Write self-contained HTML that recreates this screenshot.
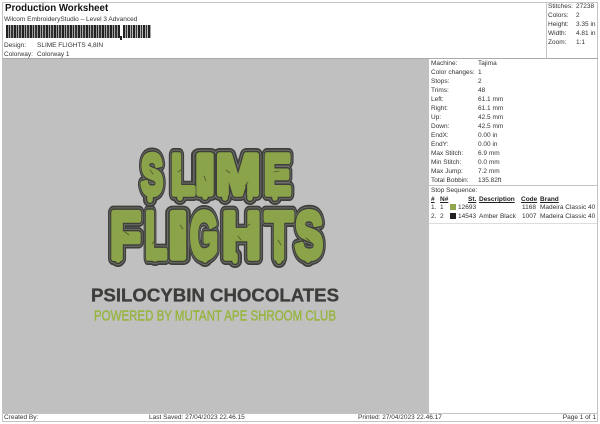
<!DOCTYPE html>
<html><head><meta charset="utf-8">
<style>
html,body{margin:0;padding:0;background:#fff}
#p{position:relative;width:600px;height:424px;overflow:hidden;background:#fff;font-family:"Liberation Sans",sans-serif;font-size:6.5px;color:#333;filter:blur(.35px)}
#p div.t{position:absolute;white-space:nowrap;line-height:9px;height:9px}
.l{position:absolute;background:#c4c4c4}
.b{font-weight:bold;text-decoration:underline;color:#222}
svg{position:absolute;left:0;top:0}
.s{font-size:57px}.f{font-size:66px}
</style></head><body><div id="p">
<div class="l" style="left:2px;top:2px;width:596px;height:1px"></div>
<div class="l" style="left:2px;top:2px;width:1px;height:420px"></div>
<div class="l" style="left:597px;top:2px;width:1px;height:420px"></div>
<div class="l" style="left:546px;top:2px;width:1px;height:57px"></div>
<div class="l" style="left:2px;top:58px;width:596px;height:1px;background:#aaa"></div>
<div style="position:absolute;left:3px;top:59px;width:426px;height:354px;background:#c0c0c0"></div>
<div class="l" style="left:2px;top:413px;width:596px;height:1px"></div>
<div class="l" style="left:2px;top:421px;width:596px;height:1px"></div>
<div class="l" style="left:429px;top:185px;width:168px;height:1px"></div>
<div class="l" style="left:429px;top:223px;width:168px;height:1px;background:#ddd"></div>

<div class="t" style="left:5px;top:3px;font-size:9.7px;font-weight:bold;color:#111;line-height:11px;height:11px">Production Worksheet</div>
<div class="t" style="left:4px;top:15px">Wilcom EmbroideryStudio – Level 3 Advanced</div>
<div id="bc" style="position:absolute;left:6px;top:25px;width:114px;height:13px;background:repeating-linear-gradient(90deg,#222 0 2px,#999 2px 3px,#222 3px 4px,#aaa 4px 5px,#333 5px 7px,#999 7px 8px)"></div>
<div style="position:absolute;left:120px;top:36px;width:2px;height:4px;background:#222"></div>
<div style="position:absolute;left:123px;top:25px;width:28px;height:13px;background:repeating-linear-gradient(90deg,#222 0 2px,#aaa 2px 3px,#333 3px 4px,#bbb 4px 5px)"></div>
<div class="t" style="left:4px;top:41px">Design:</div><div class="t" style="left:37px;top:41px">SLIME FLIGHTS 4,8IN</div>
<div class="t" style="left:4px;top:50px">Colorway:</div><div class="t" style="left:37px;top:50px">Colorway 1</div>

<div class="t" style="left:548px;top:2px">Stitches:</div><div class="t" style="left:576px;top:2px">27238</div>
<div class="t" style="left:548px;top:11px">Colors:</div><div class="t" style="left:576px;top:11px">2</div>
<div class="t" style="left:548px;top:20px">Height:</div><div class="t" style="left:576px;top:20px">3.35 in</div>
<div class="t" style="left:548px;top:29px">Width:</div><div class="t" style="left:576px;top:29px">4.81 in</div>
<div class="t" style="left:548px;top:38px">Zoom:</div><div class="t" style="left:576px;top:38px">1:1</div>

<div class="t" style="left:431px;top:59px">Machine:</div><div class="t" style="left:478px;top:59px">Tajima</div>
<div class="t" style="left:431px;top:68px">Color changes:</div><div class="t" style="left:478px;top:68px">1</div>
<div class="t" style="left:431px;top:77px">Stops:</div><div class="t" style="left:478px;top:77px">2</div>
<div class="t" style="left:431px;top:86px">Trims:</div><div class="t" style="left:478px;top:86px">48</div>
<div class="t" style="left:431px;top:95px">Left:</div><div class="t" style="left:478px;top:95px">61.1 mm</div>
<div class="t" style="left:431px;top:104px">Right:</div><div class="t" style="left:478px;top:104px">61.1 mm</div>
<div class="t" style="left:431px;top:113px">Up:</div><div class="t" style="left:478px;top:113px">42.5 mm</div>
<div class="t" style="left:431px;top:122px">Down:</div><div class="t" style="left:478px;top:122px">42.5 mm</div>
<div class="t" style="left:431px;top:131px">EndX:</div><div class="t" style="left:478px;top:131px">0.00 in</div>
<div class="t" style="left:431px;top:140px">EndY:</div><div class="t" style="left:478px;top:140px">0.00 in</div>
<div class="t" style="left:431px;top:149px">Max Stitch:</div><div class="t" style="left:478px;top:149px">6.9 mm</div>
<div class="t" style="left:431px;top:158px">Min Stitch:</div><div class="t" style="left:478px;top:158px">0.0 mm</div>
<div class="t" style="left:431px;top:167px">Max Jump:</div><div class="t" style="left:478px;top:167px">7.2 mm</div>
<div class="t" style="left:431px;top:176px">Total Bobbin:</div><div class="t" style="left:478px;top:176px">135.82ft</div>
<div class="t" style="left:431px;top:186px">Stop Sequence:</div>

<div class="t b" style="left:431px;top:195px">#</div><div class="t b" style="left:440px;top:195px">N#</div><div class="t b" style="left:468px;top:195px">St.</div><div class="t b" style="left:479px;top:195px">Description</div><div class="t b" style="left:521px;top:195px">Code</div><div class="t b" style="left:540px;top:195px">Brand</div>
<div class="t" style="left:431px;top:203px">1.</div><div class="t" style="left:440px;top:203px">1</div><div style="position:absolute;left:450px;top:204px;width:6px;height:6px;background:#8fa64a"></div><div class="t" style="left:458px;top:203px">12693</div><div class="t" style="left:522px;top:203px">1168</div><div class="t" style="left:540px;top:203px">Madeira Classic 40</div>
<div class="t" style="left:431px;top:212px">2.</div><div class="t" style="left:440px;top:212px">2</div><div style="position:absolute;left:450px;top:213px;width:6px;height:6px;background:#222"></div><div class="t" style="left:458px;top:212px">14543</div><div class="t" style="left:479px;top:212px">Amber Black</div><div class="t" style="left:522px;top:212px">1007</div><div class="t" style="left:540px;top:212px">Madeira Classic 40</div>

<div class="t" style="left:4px;top:413px">Created By:</div>
<div class="t" style="left:149px;top:413px">Last Saved: 27/04/2023 22.46.15</div>
<div class="t" style="left:358px;top:413px">Printed: 27/04/2023 22.46.17</div>
<div class="t" style="left:491px;top:413px;width:105px;text-align:right">Page 1 of 1</div>

<svg width="600" height="424" viewBox="0 0 600 424" font-family="Liberation Sans" font-weight="bold" stroke-linejoin="round" stroke-linecap="round">
<g fill="#3e3f3b" stroke="#3e3f3b" stroke-width="14">
<text class="s" x="141" y="194" textLength="22" lengthAdjust="spacingAndGlyphs">S</text><text class="s" x="171" y="194" textLength="24" lengthAdjust="spacingAndGlyphs">L</text><text class="s" x="195" y="194" textLength="20" lengthAdjust="spacingAndGlyphs">I</text><text class="s" x="216" y="194" textLength="44" lengthAdjust="spacingAndGlyphs">M</text><text class="s" x="264" y="194" textLength="27" lengthAdjust="spacingAndGlyphs">E</text>
<text class="f" x="110" y="258" textLength="31" lengthAdjust="spacingAndGlyphs">F</text><text class="f" x="145" y="258" textLength="22" lengthAdjust="spacingAndGlyphs">L</text><text class="f" x="168" y="258" textLength="20" lengthAdjust="spacingAndGlyphs">I</text><text class="f" x="190" y="258" textLength="28" lengthAdjust="spacingAndGlyphs">G</text><text class="f" x="222" y="258" textLength="39" lengthAdjust="spacingAndGlyphs">H</text><text class="f" x="265" y="258" textLength="28" lengthAdjust="spacingAndGlyphs">T</text><text class="f" x="295" y="258" textLength="28" lengthAdjust="spacingAndGlyphs">S</text>
<path fill="none" d="M150 192V200M180 192V198M205 192V197M225 192V198M250 192V198M275 192V198M118 255V260M155 255V259M178 255V258M205 255V260M235 255V261M252 255V258M279 255V261M308 255V260"/>
</g>
<g fill="#6e6f6a" stroke="#6e6f6a" stroke-width="10.5">
<text class="s" x="141" y="194" textLength="22" lengthAdjust="spacingAndGlyphs">S</text><text class="s" x="171" y="194" textLength="24" lengthAdjust="spacingAndGlyphs">L</text><text class="s" x="195" y="194" textLength="20" lengthAdjust="spacingAndGlyphs">I</text><text class="s" x="216" y="194" textLength="44" lengthAdjust="spacingAndGlyphs">M</text><text class="s" x="264" y="194" textLength="27" lengthAdjust="spacingAndGlyphs">E</text>
<text class="f" x="110" y="258" textLength="31" lengthAdjust="spacingAndGlyphs">F</text><text class="f" x="145" y="258" textLength="22" lengthAdjust="spacingAndGlyphs">L</text><text class="f" x="168" y="258" textLength="20" lengthAdjust="spacingAndGlyphs">I</text><text class="f" x="190" y="258" textLength="28" lengthAdjust="spacingAndGlyphs">G</text><text class="f" x="222" y="258" textLength="39" lengthAdjust="spacingAndGlyphs">H</text><text class="f" x="265" y="258" textLength="28" lengthAdjust="spacingAndGlyphs">T</text><text class="f" x="295" y="258" textLength="28" lengthAdjust="spacingAndGlyphs">S</text>
<path fill="none" d="M150 192V200M180 192V198M205 192V197M225 192V198M250 192V198M275 192V198M118 255V260M155 255V259M178 255V258M205 255V260M235 255V261M252 255V258M279 255V261M308 255V260"/>
</g>
<g fill="#3e3f3b" stroke="#3e3f3b" stroke-width="8.5">
<text class="s" x="141" y="194" textLength="22" lengthAdjust="spacingAndGlyphs">S</text><text class="s" x="171" y="194" textLength="24" lengthAdjust="spacingAndGlyphs">L</text><text class="s" x="195" y="194" textLength="20" lengthAdjust="spacingAndGlyphs">I</text><text class="s" x="216" y="194" textLength="44" lengthAdjust="spacingAndGlyphs">M</text><text class="s" x="264" y="194" textLength="27" lengthAdjust="spacingAndGlyphs">E</text>
<text class="f" x="110" y="258" textLength="31" lengthAdjust="spacingAndGlyphs">F</text><text class="f" x="145" y="258" textLength="22" lengthAdjust="spacingAndGlyphs">L</text><text class="f" x="168" y="258" textLength="20" lengthAdjust="spacingAndGlyphs">I</text><text class="f" x="190" y="258" textLength="28" lengthAdjust="spacingAndGlyphs">G</text><text class="f" x="222" y="258" textLength="39" lengthAdjust="spacingAndGlyphs">H</text><text class="f" x="265" y="258" textLength="28" lengthAdjust="spacingAndGlyphs">T</text><text class="f" x="295" y="258" textLength="28" lengthAdjust="spacingAndGlyphs">S</text>
<path fill="none" d="M150 192V200M180 192V198M205 192V197M225 192V198M250 192V198M275 192V198M118 255V260M155 255V259M178 255V258M205 255V260M235 255V261M252 255V258M279 255V261M308 255V260"/>
</g>
<g fill="#8ba44a" stroke="#8ba44a" stroke-width="5.5">
<text class="s" x="141" y="194" textLength="22" lengthAdjust="spacingAndGlyphs">S</text><text class="s" x="171" y="194" textLength="24" lengthAdjust="spacingAndGlyphs">L</text><text class="s" x="195" y="194" textLength="20" lengthAdjust="spacingAndGlyphs">I</text><text class="s" x="216" y="194" textLength="44" lengthAdjust="spacingAndGlyphs">M</text><text class="s" x="264" y="194" textLength="27" lengthAdjust="spacingAndGlyphs">E</text>
<text class="f" x="110" y="258" textLength="31" lengthAdjust="spacingAndGlyphs">F</text><text class="f" x="145" y="258" textLength="22" lengthAdjust="spacingAndGlyphs">L</text><text class="f" x="168" y="258" textLength="20" lengthAdjust="spacingAndGlyphs">I</text><text class="f" x="190" y="258" textLength="28" lengthAdjust="spacingAndGlyphs">G</text><text class="f" x="222" y="258" textLength="39" lengthAdjust="spacingAndGlyphs">H</text><text class="f" x="265" y="258" textLength="28" lengthAdjust="spacingAndGlyphs">T</text><text class="f" x="295" y="258" textLength="28" lengthAdjust="spacingAndGlyphs">S</text>
<path fill="none" d="M150 192V200M180 192V198M205 192V197M225 192V198M250 192V198M275 192V198M118 255V260M155 255V259M178 255V258M205 255V260M235 255V261M252 255V258M279 255V261M308 255V260"/>
</g>
<path fill="none" stroke="#4d5a2c" stroke-width=".8" d="M150 170l3 4M178 172l4-3M204 176l2 5M226 170l4 3M248 182l-3 4M274 172l5-1M125 232l4 3M155 240l-3 4M180 225l3 4M206 245l4-2M238 236l3 4M250 224l-4 3M278 240l3 5M306 238l4 3"/>
<text x="91" y="301.5" font-size="18" fill="#3d3e3b" stroke="#3d3e3b" stroke-width=".35" textLength="248" lengthAdjust="spacingAndGlyphs">PSILOCYBIN CHOCOLATES</text>
<text x="94" y="320.5" font-size="15" font-weight="normal" fill="#97b53f" stroke="#97b53f" stroke-width=".4" textLength="242" lengthAdjust="spacingAndGlyphs">POWERED BY MUTANT APE SHROOM CLUB</text>
</svg>
</div></body></html>
